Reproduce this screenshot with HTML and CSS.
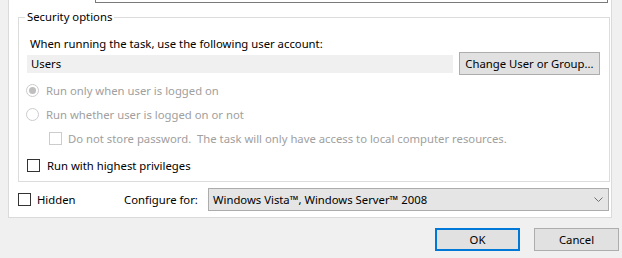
FILE: index.html
```html
<!DOCTYPE html>
<html>
<head>
<meta charset="UTF-8">
<title>Task properties</title>
<link rel="stylesheet" href="styles.css">
</head>
<body>
<div class="panel">
  <div class="desc-box"></div>
  <fieldset class="group">
    <legend>Security options</legend>
    <div class="row label-row">When running the task, use the following user account:</div>
    <div class="row account-row">
      <div class="account">Users</div>
      <button class="btn change">Change User or Group...</button>
    </div>
    <div class="row opt disabled first">
      <span class="radio checked"></span>
      <span>Run only when user is logged on</span>
    </div>
    <div class="row opt disabled second">
      <span class="radio"></span>
      <span>Run whether user is logged on or not</span>
    </div>
    <div class="row opt disabled nested">
      <span class="check"></span>
      <span>Do not store password.&nbsp; The task will only have access to local computer resources.</span>
    </div>
    <div class="row opt highest">
      <span class="check"></span>
      <span>Run with highest privileges</span>
    </div>
  </fieldset>
  <div class="bottom-row">
    <div class="hidden-opt">
      <span class="check"></span>
      <span>Hidden</span>
    </div>
    <div class="config-label">Configure for:</div>
    <div class="combo">
      <span>Windows Vista™, Windows Server™ 2008</span>
      <svg class="chevron" width="9" height="5" viewBox="0 0 9 5"><path d="M0.5 0.5 L4.5 4.5 L8.5 0.5" fill="none" stroke="#707070" stroke-width="1"/></svg>
    </div>
  </div>
</div>
<div class="footer">
  <button class="btn ok">OK</button>
  <button class="btn cancel">Cancel</button>
</div>
</body>
</html>
```

FILE: styles.css
```css
body { margin: 0; background: #f0f0f0; font-family: "Noto Sans", "Liberation Sans", sans-serif; font-size: 11.3px; color: #000; }

.panel { margin-left: 8px; width: 604px; height: 218px; box-sizing: border-box; background: #fff; border: 1px solid #dadada; border-top: none; }
.desc-box { margin-left: 86px; width: 513px; height: 3px; box-sizing: border-box; border: 1px solid #7a7a7a; border-top: none; }

fieldset.group { margin: 6px 0 0 9px; padding: 0 0 6px 0; width: 592px; box-sizing: border-box; border: 1px solid #dcdcdc; }
fieldset.group legend { margin-left: 6px; padding: 0 2px; line-height: 16px; }

.row { display: flex; align-items: center; }
.label-row { margin-top: 9px; height: 18px; padding-left: 11px; }
.account-row { height: 23px; }
.account { margin-left: 8px; width: 426px; height: 18px; line-height: 18px; padding-left: 4px; box-sizing: border-box; background: #f0f0f0; }

.btn { font: inherit; color: #000; background: #e1e1e1; border: 1px solid #adadad; padding: 0; height: 23px; box-sizing: border-box; }
.change { margin-left: 6px; width: 141px; }

.opt { height: 20px; gap: 7px; padding-left: 7px; }
.opt.first { margin-top: 5px; }
.opt.second { margin-top: 4px; }
.opt.nested { margin-top: 4px; padding-left: 30px; gap: 6px; }
.opt.highest { margin-top: 7px; padding-left: 8px; gap: 7px; }
.disabled { color: #a0a0a0; }

.radio { width: 13px; height: 13px; box-sizing: border-box; border: 1px solid #cccccc; border-radius: 50%; display: flex; align-items: center; justify-content: center; }
.radio.checked::after { content: ""; width: 7px; height: 7px; border-radius: 50%; background: #bfbfbf; }
.check { width: 13px; height: 13px; box-sizing: border-box; border: 1px solid #333; background: #fff; flex: none; }
.disabled .check { border-color: #cccccc; }

.bottom-row { display: flex; align-items: center; margin: 6px 0 0 9px; height: 23px; }
.hidden-opt { width: 106px; display: flex; align-items: center; gap: 6px; }
.config-label { width: 84px; }
.combo { width: 401px; height: 23px; box-sizing: border-box; background: #e5e5e5; border: 1px solid #acacac; display: flex; align-items: center; justify-content: space-between; padding: 0 5px 0 4px; }

.footer { display: flex; justify-content: flex-end; gap: 14px; margin-top: 10px; padding-right: 3px; }
.ok { width: 85px; border: 2px solid #0078d7; }
.cancel { width: 85px; }
```
